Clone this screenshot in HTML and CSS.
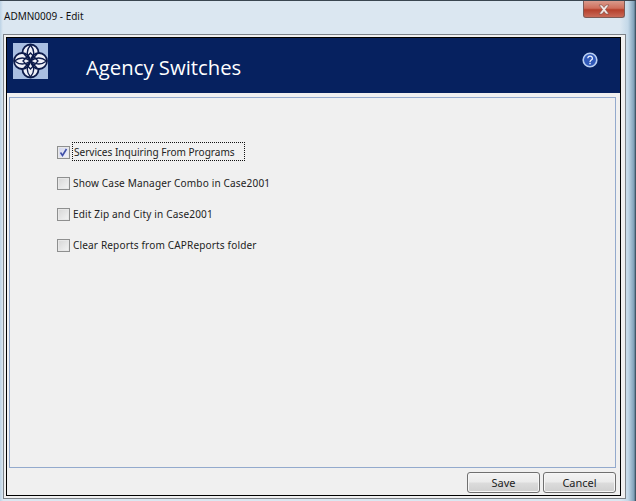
FILE: index.html
```html
<!DOCTYPE html>
<html lang="en">
<head>
<meta charset="utf-8">
<title>ADMN0009 - Edit</title>
<link rel="stylesheet" href="styles.css">
</head>
<body>
<div class="window">
  <div class="titlebar">ADMN0009 - Edit</div>
  <div class="close">
    <svg width="14" height="11" viewBox="0 0 14 11"><path d="M2 1h3l2 2.500 2-2.500h3l-3.500 4.500 3.500 4.500h-3l-2-2.500-2 2.500h-3l3.500-4.500z" fill="#f4ecea" stroke="#7a4a42" stroke-width=".6"/></svg>
  </div>
  <div class="frame">
    <div class="inner">
      <header class="banner">
        <svg class="logo" width="35" height="36" viewBox="0 0 35 36">
          <rect width="35" height="36" fill="#a9bfe2"/>
          <g fill="#eef0f8" stroke="#0b1a4a" stroke-width="1.800">
            <circle cx="17.500" cy="9.500" r="8"/>
            <circle cx="17.500" cy="26.500" r="8"/>
            <circle cx="9" cy="18" r="8"/>
            <circle cx="26" cy="18" r="8"/>
          </g>
          <g fill="none" stroke="#0b1a4a" stroke-width="1.300">
            <path d="M17.500 2Q11 10 17.500 18Q24 10 17.500 2Z"/>
            <path d="M17.500 34Q11 26 17.500 18Q24 26 17.500 34Z"/>
            <path d="M1.500 18Q9 12 17.500 18Q9 24 1.500 18Z"/>
            <path d="M33.500 18Q26 12 17.500 18Q26 24 33.500 18Z"/>
            <path d="M11 11L24 25M24 11L11 25M17.500 10L25 18L17.500 26L10 18Z"/>
          </g>
        </svg>
        <h1 class="heading">Agency Switches</h1>
        <svg class="help" width="16" height="16" viewBox="0 0 16 16">
          <circle cx="8" cy="8" r="6.800" fill="#2f58b8" stroke="#b9cff2" stroke-width="1.600"/>
          <path d="M5.800 6.200a2.300 2.100 0 1 1 3.500 1.800c-.9.600-1.300 1-1.300 1.900" fill="none" stroke="#eef4ff" stroke-width="1.300"/>
          <rect x="7.300" y="10.800" width="1.400" height="1.500" fill="#eef4ff"/>
        </svg>
      </header>
      <main class="panel">
        <label class="row">
          <span class="box checked">
            <svg width="9" height="9" viewBox="0 0 9 9"><path d="M1.500 4.500l2 3 4-6.500" fill="none" stroke="#3f4fa8" stroke-width="1.600"/></svg>
          </span>
          <span class="text focus">Services Inquiring From Programs</span>
        </label>
        <label class="row"><span class="box"></span><span class="text">Show Case Manager Combo in Case2001</span></label>
        <label class="row"><span class="box"></span><span class="text">Edit Zip and City in Case2001</span></label>
        <label class="row"><span class="box"></span><span class="text">Clear Reports from CAPReports folder</span></label>
      </main>
      <footer class="actions">
        <button class="btn" type="button">Save</button>
        <button class="btn" type="button">Cancel</button>
      </footer>
    </div>
  </div>
</div>
</body>
</html>
```

FILE: styles.css
```css
html, body {
  margin: 0;
  padding: 0;
}
body {
  width: 636px;
  height: 501px;
  overflow: hidden;
  background: #fff;
  font-family: "Noto Sans", sans-serif;
}
.window {
  position: relative;
  box-sizing: border-box;
  width: 636px;
  height: 501px;
  padding: 0 10px 2px 3px;
  background: linear-gradient(90deg, #bcd3e6 0, #dbe7f1 3px, #dbe7f1 620px, #c3d8e8 628px, #7fa0b8 634px, #2c3e4c 636px);
  border-top: 1px solid #3a4650;
}
.titlebar {
  height: 33px;
  padding: 8px 0 0 1px;
  box-sizing: border-box;
  font-size: 10px;
  line-height: 14px;
  color: #111;
  white-space: nowrap;
}
.close {
  position: absolute;
  left: 583px;
  top: 0;
  width: 42px;
  height: 17px;
  box-sizing: border-box;
  display: flex;
  align-items: center;
  justify-content: center;
  border: 1px solid #7d5a55;
  border-top: 0;
  border-radius: 0 0 3px 3px;
  background: linear-gradient(#d99a8c 0, #cf6f5c 45%, #b5402c 55%, #c96a58 100%);
}
.frame {
  width: 623px;
  height: 465px;
  box-sizing: border-box;
  padding: 2px 4px 2px 2px;
  background: #f0f0f0;
  border: 1px solid #7c8288;
}
.inner {
  height: 459px;
  box-sizing: border-box;
  border: 1px solid #000;
  background: #f0f0f0;
  display: flex;
  flex-direction: column;
}
.banner {
  height: 55px;
  flex: none;
  display: flex;
  align-items: flex-start;
  background: #06215f;
  margin-bottom: 4px;
}
.logo {
  flex: none;
  margin: 5px 0 0 6px;
}
.heading {
  margin: 14px 0 0 38px;
  font-family: "Open Sans", sans-serif;
  font-size: 20.300px;
  line-height: 30px;
  font-weight: 400;
  color: #fff;
  white-space: nowrap;
}
.help {
  flex: none;
  margin: 14px 22px 0 auto;
}
.panel {
  flex: none;
  height: 371px;
  width: 607px;
  box-sizing: border-box;
  margin-left: 2px;
  padding: 44px 0 0 47px;
  border: 1px solid #93aacd;
  display: flex;
  flex-direction: column;
  gap: 12px;
}
.row {
  display: flex;
  align-items: flex-start;
  gap: 2px;
  height: 19px;
  font-size: 10.050px;
  color: #222;
}
.box {
  flex: none;
  width: 11px;
  height: 11px;
  margin-top: 4px;
  display: flex;
  align-items: center;
  justify-content: center;
  border: 1px solid #8e8f8f;
  background: linear-gradient(135deg, #d6d6d6, #f4f4f4);
  box-shadow: inset 0 0 0 1px #e8e8e8;
}
.box.checked {
  background: linear-gradient(135deg, #d0d4ec, #f2f3fb);
}
.text {
  padding: 2px 0 0;
  line-height: 15px;
  letter-spacing: 0.150px;
  white-space: nowrap;
  border: 1px solid transparent;
}
.text.focus {
  padding: 2px 9px 0 1px;
  letter-spacing: 0;
  border: 1px dotted #111;
}
.actions {
  display: flex;
  justify-content: flex-end;
  gap: 3px;
  padding: 4px 4px 0 0;
}
.btn {
  width: 73px;
  height: 21px;
  padding: 0;
  border: 1px solid #707070;
  border-radius: 3px;
  background: linear-gradient(#f3f3f3 0, #ebebeb 48%, #dcdcdc 52%, #cfcfcf 100%);
  box-shadow: inset 0 0 0 1px #f6f6f6;
  font-family: "Noto Sans", sans-serif;
  font-size: 11px;
  color: #222;
}
```
